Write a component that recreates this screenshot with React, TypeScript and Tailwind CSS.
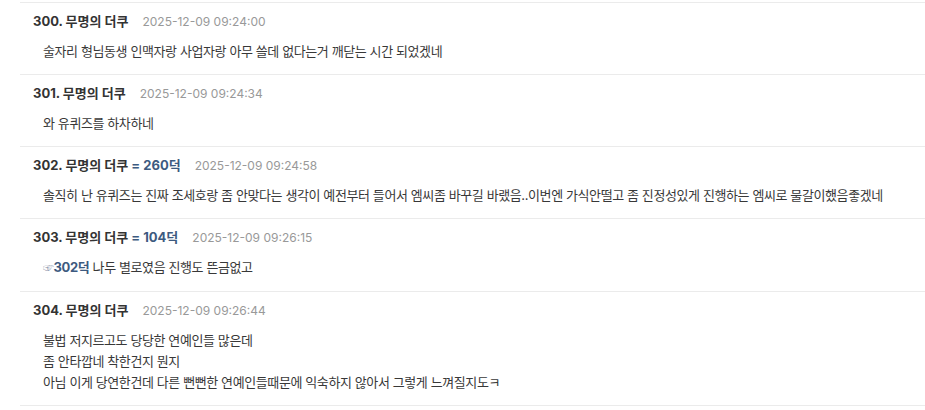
import React from 'react';

type Comment = {
  no: number;
  nick: string;
  duk?: string;
  date: string;
  lines: React.ReactNode[];
};

const comments: Comment[] = [
  {
    no: 300,
    nick: '무명의 더쿠',
    date: '2025-12-09 09:24:00',
    lines: ['술자리 형님동생 인맥자랑 사업자랑 아무 쓸데 없다는거 깨닫는 시간 되었겠네'],
  },
  {
    no: 301,
    nick: '무명의 더쿠',
    date: '2025-12-09 09:24:34',
    lines: ['와 유퀴즈를 하차하네'],
  },
  {
    no: 302,
    nick: '무명의 더쿠',
    duk: '260덕',
    date: '2025-12-09 09:24:58',
    lines: [
      '솔직히 난 유퀴즈는 진짜 조세호랑 좀 안맞다는 생각이 예전부터 들어서 엠씨좀 바꾸길 바랬음..이번엔 가식안떨고 좀 진정성있게 진행하는 엠씨로 물갈이했음좋겠네',
    ],
  },
  {
    no: 303,
    nick: '무명의 더쿠',
    duk: '104덕',
    date: '2025-12-09 09:26:15',
    lines: [
      <>
        <span className="text-[11px] text-[#9aa3b5]">☞</span>
        <span className="font-bold text-[#3d5a80]">302덕</span> 나두 별로였음 진행도 뜬금없고
      </>,
    ],
  },
  {
    no: 304,
    nick: '무명의 더쿠',
    date: '2025-12-09 09:26:44',
    lines: [
      '불법 저지르고도 당당한 연예인들 많은데',
      '좀 안타깝네 착한건지 뭔지',
      '아님 이게 당연한건데 다른 뻔뻔한 연예인들때문에 익숙하지 않아서 그렇게 느껴질지도ㅋ',
    ],
  },
];

function CommentItem({ c }: { c: Comment }) {
  return (
    <li className="border-t border-[#ebebeb] pt-[9px] pb-[12px] pl-[13px]">
      <div className="flex items-center h-[20px]">
        <span className="text-[13px] font-bold text-[#333]">
          {c.no}. {c.nick}
          {c.duk && <span className="text-[#3d5a80]"> = {c.duk}</span>}
        </span>
        <span className="ml-[14px] text-[12px] text-[#999]">{c.date}</span>
      </div>
      <div className="mt-[9px] pl-[10px] text-[13px] leading-[21px] tracking-[-0.4px] text-[#383838]">
        {c.lines.map((l, i) => (
          <div key={i}>{l}</div>
        ))}
      </div>
    </li>
  );
}

export default function App() {
  return (
    <div
      className="w-[925px] h-[410px] bg-white overflow-hidden pt-[2px]"
      style={{ fontFamily: 'Inter, "Noto Sans CJK KR", sans-serif' }}
    >
      <ul className="ml-[20px] border-b border-[#ebebeb]">
        {comments.map((c) => (
          <CommentItem key={c.no} c={c} />
        ))}
      </ul>
    </div>
  );
}
